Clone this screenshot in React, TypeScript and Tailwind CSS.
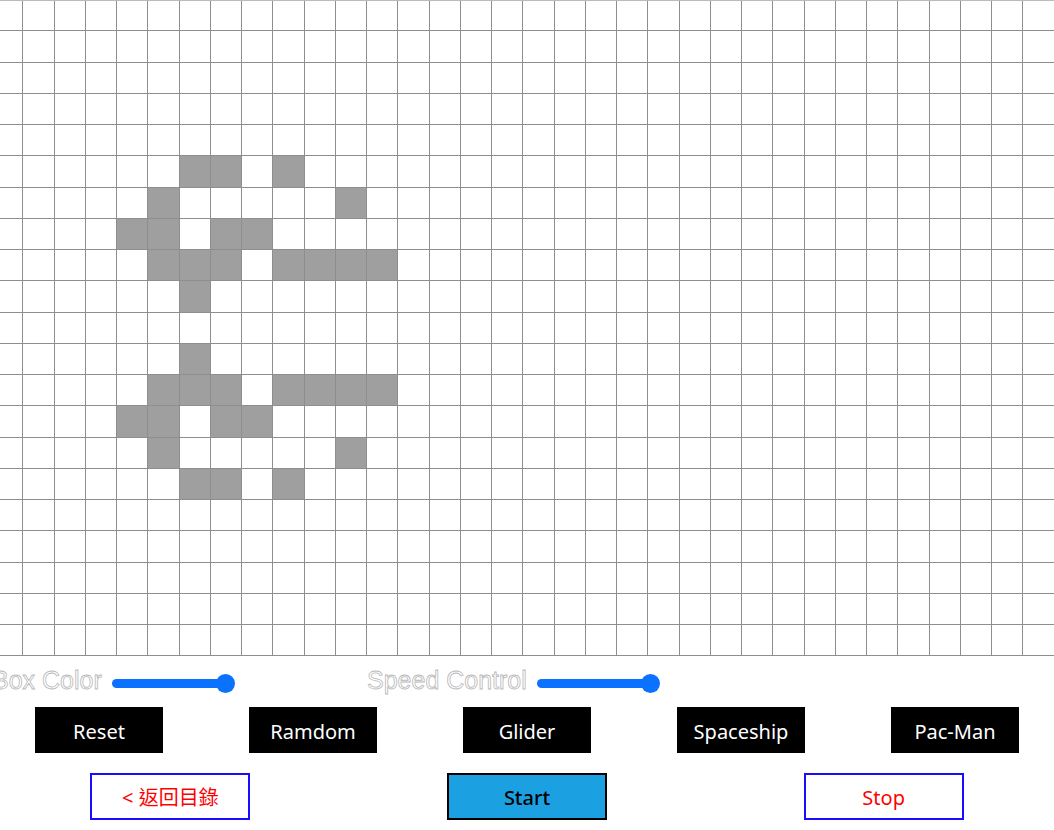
import React from "react";

const COLS = 35;
const ROWS = 21;

const filled: Record<number, number[]> = {
  5: [6, 7, 9],
  6: [5, 11],
  7: [4, 5, 7, 8],
  8: [5, 6, 7, 9, 10, 11, 12],
  9: [6],
  11: [6],
  12: [5, 6, 7, 9, 10, 11, 12],
  13: [4, 5, 7, 8],
  14: [5, 11],
  15: [6, 7, 9],
};

function Slider() {
  return (
    <div className="relative w-[123px] h-[19px] flex items-center">
      <div className="h-[9px] w-[118px] rounded-full bg-[#0b72ff]" />
      <div className="absolute right-0 top-0 w-[19px] h-[19px] rounded-full bg-[#0b72ff]" />
    </div>
  );
}

const labelCls =
  "text-[25px] leading-none mt-[-3px] text-white [-webkit-text-stroke:0.8px_#b8b8b8] [font-family:'Liberation_Sans',Arial,sans-serif]";

export default function App() {
  const cells: React.ReactNode[] = [];
  for (let r = 0; r < ROWS; r++) {
    for (let c = 0; c < COLS; c++) {
      const on = filled[r]?.includes(c);
      cells.push(
        <div
          key={`${r}-${c}`}
          className={`border-r border-b border-[#8e8e8e] ${on ? "bg-[#9f9f9f]" : "bg-white"}`}
        />
      );
    }
  }

  const btnFont = "[font-family:'Noto_Sans','Noto_Sans_CJK_TC',sans-serif]";

  return (
    <div className="w-full h-[830px] overflow-hidden bg-white">
      <div className="w-[1070px] ml-[-8px]">
        <div className="w-[1070px] overflow-hidden border-t border-[#bbb]">
          <div className="grid grid-cols-[repeat(35,31.25px)] grid-rows-[repeat(21,31.25px)] w-[1093.75px] mt-[-1px]">
            {cells}
          </div>
        </div>

        <div className="flex items-center h-[51px] pt-[1px]">
          <span className={`${labelCls} w-[110px] whitespace-nowrap`}>Box Color</span>
          <div className="ml-[10px] mt-[3px]">
            <Slider />
          </div>
          <span className={`${labelCls} ml-[132px] w-[160px] whitespace-nowrap`}>Speed Control</span>
          <div className="ml-[10px] mt-[3px]">
            <Slider />
          </div>
        </div>

        <div className="flex">
          {["Reset", "Ramdom", "Glider", "Spaceship", "Pac-Man"].map((t) => (
            <div key={t} className="w-[214px] flex justify-center">
              <button
                className={`w-[128px] h-[46px] pt-[3px] bg-black text-white text-[20px] leading-none ${btnFont}`}
              >
                {t}
              </button>
            </div>
          ))}
        </div>

        <div className="flex mt-[20px]">
          <div className="flex-1 flex justify-center">
            <button
              className={`w-[160px] h-[47px] pt-[2px] border-2 border-[#1a0dff] bg-white text-[#ff0000] text-[20px] leading-none ${btnFont}`}
            >
              &lt; 返回目錄
            </button>
          </div>
          <div className="flex-1 flex justify-center">
            <button
              className={`w-[160px] h-[47px] pt-[2px] border-2 border-black bg-[#1ba1e2] text-black text-[20px] font-medium leading-none ${btnFont}`}
            >
              Start
            </button>
          </div>
          <div className="flex-1 flex justify-center">
            <button
              className={`w-[160px] h-[47px] pt-[2px] border-2 border-[#1a0dff] bg-white text-[#ff0000] text-[20px] leading-none ${btnFont}`}
            >
              Stop
            </button>
          </div>
        </div>
      </div>
    </div>
  );
}
